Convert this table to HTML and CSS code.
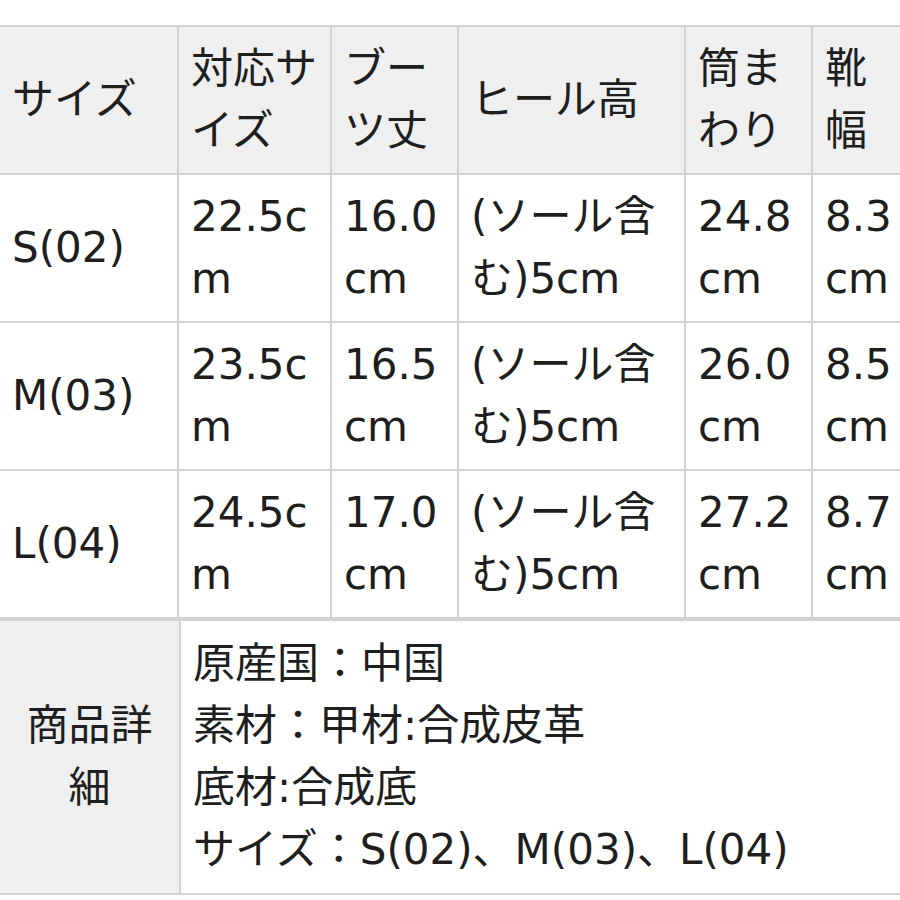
FILE: index.html
```html
<!DOCTYPE html>
<html lang="ja">
<head>
<meta charset="utf-8">
<link rel="stylesheet" href="styles.css">
</head>
<body>
<div class="wrap">
<table class="size-table">
  <colgroup>
    <col class="c1"><col class="c2"><col class="c3"><col class="c4"><col class="c5"><col class="c6">
  </colgroup>
  <tr class="head">
    <th>サイズ</th>
    <th>対応サイズ</th>
    <th>ブーツ丈</th>
    <th>ヒール高</th>
    <th>筒まわり</th>
    <th>靴幅</th>
  </tr>
  <tr>
    <td>S(02)</td>
    <td>22.5cm</td>
    <td>16.0cm</td>
    <td>(ソール含む)5cm</td>
    <td>24.8cm</td>
    <td>8.3cm</td>
  </tr>
  <tr>
    <td>M(03)</td>
    <td>23.5cm</td>
    <td>16.5cm</td>
    <td>(ソール含む)5cm</td>
    <td>26.0cm</td>
    <td>8.5cm</td>
  </tr>
  <tr>
    <td>L(04)</td>
    <td>24.5cm</td>
    <td>17.0cm</td>
    <td>(ソール含む)5cm</td>
    <td>27.2cm</td>
    <td>8.7cm</td>
  </tr>
</table>
<table class="detail-table">
  <colgroup><col class="d1"><col class="d2"></colgroup>
  <tr>
    <th class="label">商品詳細</th>
    <td class="info">原産国：中国<br>素材：甲材:合成皮革<br>底材:合成底<br>サイズ：S(02)、M(03)、L(04)</td>
  </tr>
</table>
</div>
</body>
</html>
```
FILE: styles.css
```css
html, body {
  margin: 0;
  padding: 0;
  background: #ffffff;
  overflow: hidden;
}
body {
  font-family: "DejaVu Sans", "Noto Sans CJK JP", sans-serif;
  color: #1e1e1e;
}
.wrap {
  padding-top: 25px;
  margin-left: -2px;
}
table {
  border-collapse: collapse;
  table-layout: fixed;
  font-size: 42px;
  line-height: 62px;
}
.size-table { width: 915px; }
.c1 { width: 179px; }
.c2 { width: 153px; }
.c3 { width: 127px; }
.c4 { width: 227px; }
.c5 { width: 127px; }
.c6 { width: 102px; }
th, td {
  border: 2px solid #d2d2d2;
  padding: 11px 12px 11px 12px;
  text-align: left;
  vertical-align: middle;
  font-weight: normal;
  word-break: break-all;
}
.head th {
  background: #efefef;
}
.detail-table { width: 915px; }
.d1 { width: 181px; }
.d2 { width: 734px; }
.label {
  background: #efefef;
  text-align: center;
  padding: 12px 18px;
}
.info {
  padding: 12px 12px;
}
```
